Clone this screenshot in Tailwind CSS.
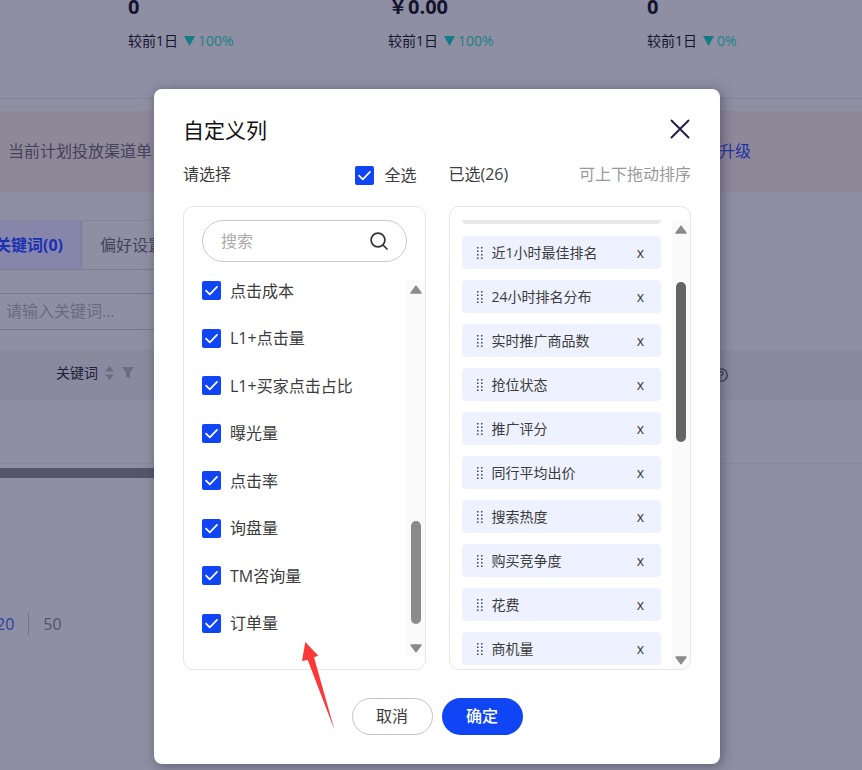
<!DOCTYPE html>
<html lang="zh-CN">
<head>
<meta charset="utf-8">
<meta name="viewport" content="width=device-width, initial-scale=1">
<title>自定义列</title>
<script src="https://cdn.jsdelivr.net/npm/@tailwindcss/browser@4"></script>
</head>
<body class="relative min-h-screen overflow-hidden bg-[#8f8fa3] font-['Open_Sans','Noto_Sans_CJK_SC',sans-serif] text-[#3c3c3c]">

<svg class="hidden">
  <symbol id="check" viewBox="0 0 19 19"><path d="M4 9.6 7.8 13.4 15 5.8" fill="none" stroke="#fff" stroke-width="1.7" stroke-linecap="round" stroke-linejoin="round"/></symbol>
  <symbol id="grip" viewBox="0 0 8 14"><path d="M1 1h1.5v1.5H1zM5 1h1.5v1.5H5zM1 4.5h1.5V6H1zM5 4.5h1.5V6H5zM1 8h1.5v1.5H1zM5 8h1.5v1.5H5zM1 11.5h1.5V13H1zM5 11.5h1.5V13H5z" fill="#444"/></symbol>
  <symbol id="up" viewBox="0 0 12 9"><path d="M6 1.2 11 8H1z" fill="#8b8b8b" stroke="#8b8b8b" stroke-width="1.4" stroke-linejoin="round"/></symbol>
  <symbol id="down" viewBox="0 0 12 9"><path d="M1 1h10L6 7.8z" fill="#8b8b8b" stroke="#8b8b8b" stroke-width="1.4" stroke-linejoin="round"/></symbol>
</svg>

<!-- page behind the dialog -->
<main>
  <section class="h-[99px] border-b border-[#83839a] pl-32 text-sm text-[#14142e]">
    <div class="grid grid-cols-[260px_259px_1fr]">
      <div>
        <p class="h-[14px] text-xl leading-[14px] font-bold">0</p>
        <p class="mt-[15px] flex items-center leading-6">较前1日<svg class="mr-[3px] ml-1.5 h-[10px] w-[11px]" viewBox="0 0 11 10"><path d="M0 0h11L5.500 10z" fill="#147c84"/></svg><span class="text-[#1d8088]">100%</span></p>
      </div>
      <div>
        <p class="h-[14px] text-xl leading-[14px] font-bold">￥0.00</p>
        <p class="mt-[15px] flex items-center leading-6">较前1日<svg class="mr-[3px] ml-1.5 h-[10px] w-[11px]" viewBox="0 0 11 10"><path d="M0 0h11L5.500 10z" fill="#147c84"/></svg><span class="text-[#1d8088]">100%</span></p>
      </div>
      <div>
        <p class="h-[14px] text-xl leading-[14px] font-bold">0</p>
        <p class="mt-[15px] flex items-center leading-6">较前1日<svg class="mr-[3px] ml-1.5 h-[10px] w-[11px]" viewBox="0 0 11 10"><path d="M0 0h11L5.500 10z" fill="#147c84"/></svg><span class="text-[#1d8088]">0%</span></p>
      </div>
    </div>
  </section>

  <section class="mt-3 flex h-[81px] items-center bg-[#8f8899] pb-0.5 pl-2 text-base text-[#43435a]">
    <p class="w-[711px]">当前计划投放渠道单</p>
    <a href="#" class="text-[#2433a4]">升级</a>
  </section>

  <nav class="mt-7 flex h-[50px] w-[600px] border-y border-t-[#86869b] border-b-[#7b7b91] text-base">
    <a href="#" class="flex w-[82px] items-center justify-end border-r border-[#7b7b91] bg-[#8686ab] pr-[18px] font-bold whitespace-nowrap text-[#1c30b4]">关键词(0)</a>
    <a href="#" class="flex items-center pl-[18px] text-[#43435a]">偏好设置</a>
  </nav>

  <input aria-label="关键词" placeholder="请输入关键词..." class="mt-[23px] block h-[37px] w-[400px] border-y border-[#777790] pb-0.5 pl-1.5 text-base placeholder:text-[#6a6a80]">

  <table class="mt-5 w-full border-collapse text-sm text-[#20203a]">
    <thead>
      <tr class="h-[49px] border-y border-[#89899d] bg-[#8a8a9e]">
        <th scope="col" class="w-[714px] pb-1 pl-14 text-left font-normal">
          <span class="flex items-center">关键词
            <svg class="ml-[7px] h-[14px] w-[9px]" viewBox="0 0 9 14"><path d="M0 5.500 4.500 0 9 5.500zM0 8.500h9L4.500 14z" fill="#6c6c82"/></svg>
            <svg class="ml-2 h-[12px] w-[12px]" viewBox="0 0 12 12"><path d="M0 0h12L8 5.500V11.500L4 9.500V5.500z" fill="#6c6c82"/></svg>
          </span>
        </th>
        <th scope="col" class="text-left">
          <svg class="h-[14px] w-[14px]" viewBox="0 0 14 14" fill="none" stroke="#33334a" stroke-width="1.300"><circle cx="7" cy="7" r="6.200"/><path d="M5 5.600c0-2.600 4-2.600 4-.2 0 1.500-2 1.500-2 2.900M7 9.400v1.300"/></svg>
        </th>
      </tr>
    </thead>
    <tbody><tr class="h-16 border-b border-[#89899d]"><td colspan="2"></td></tr></tbody>
  </table>
  <div class="mt-1 h-[10px] w-[500px] bg-[#55556a]"></div>

  <nav class="mt-[132px] flex h-7 items-center text-base text-[#55556a]">
    <a href="#" class="-ml-1 text-[#2c40a8]">20</a>
    <span class="mx-[14px] h-6 w-px bg-[#74748a]"></span>
    <a href="#">50</a>
  </nav>
</main>

<!-- dialog layer -->
<div class="absolute inset-0 flex items-start justify-center pt-[89px] pl-3">
  <div role="dialog" aria-labelledby="title" class="relative w-[566px] rounded-lg bg-white px-[29px] pt-6 pb-[29px] shadow-[2px_2px_12px_rgba(40,40,70,0.5)]">
    <header class="flex h-9 items-center justify-between">
      <h1 id="title" class="text-[21px] text-[#111]">自定义列</h1>
      <button aria-label="关闭" class="mb-1 mr-px"><svg class="h-5 w-5" viewBox="0 0 20 20"><path d="M1.500 1.500 18.500 18.500M18.500 1.500 1.500 18.500" stroke="#1e1b45" stroke-width="1.900" stroke-linecap="round"/></svg></button>
    </header>

    <div class="mt-[10px] grid grid-cols-2 gap-[23px] text-base leading-7">
      <div class="flex items-center justify-between pr-[9px]">
        <span>请选择</span>
        <label class="flex items-center gap-[10px] pt-0.5"><span class="grid"><input type="checkbox" checked class="col-start-1 row-start-1 h-[19px] w-[19px] appearance-none rounded-[2px] bg-[#0f45f5]"><svg class="pointer-events-none col-start-1 row-start-1 h-[19px] w-[19px]"><use href="#check"/></svg></span>全选</label>
      </div>
      <div class="flex items-center justify-between"><span>已选(26)</span><span class="text-[#999]">可上下拖动排序</span></div>
    </div>

    <div class="mt-[17px] grid h-[464px] grid-cols-2 gap-[23px]">
      <section class="flex flex-col overflow-hidden rounded-[10px] border border-[#e6e6e9]">
        <div class="mx-[18px] mt-[13px] flex h-[42px] items-center rounded-full border border-[#c9c9cc] px-[18px]">
          <input type="search" aria-label="搜索" placeholder="搜索" class="min-w-0 flex-1 text-base outline-none placeholder:text-[#aaa]">
          <svg class="h-[18px] w-[18px]" viewBox="0 0 18 18" fill="none" stroke="#333" stroke-width="1.700" stroke-linecap="round"><circle cx="8" cy="8" r="6.900"/><path d="m13 13 4 4"/></svg>
        </div>
        <div class="mt-1 flex flex-1">
          <ul id="options" class="mt-px flex h-[380px] flex-1 flex-col pl-[18px] text-base"></ul>
          <div class="mt-[14px] mb-3 flex w-[18px] flex-col items-center bg-[#fafafa] pt-[5px] pb-1">
            <svg class="h-[9px] w-3"><use href="#up"/></svg>
            <span class="mt-auto mb-5 h-[103px] w-[10px] rounded-full bg-[#8b8b8b]"></span>
            <svg class="h-[9px] w-3"><use href="#down"/></svg>
          </div>
        </div>
      </section>

      <section class="flex overflow-hidden rounded-[10px] border border-[#e6e6e9] pt-[13px]">
        <div class="flex flex-1 flex-col pr-[11px] pl-3">
          <div class="h-1 shrink-0 rounded-b bg-[#e9e9ea]"></div>
          <ul id="chosen" class="mt-3 flex flex-col gap-[11px] text-sm"></ul>
        </div>
        <div class="flex w-[18px] flex-col items-center bg-[#fafafa] pt-[5px] pb-1">
          <svg class="h-[9px] w-3"><use href="#up"/></svg>
          <span class="mt-12 mb-auto h-40 w-[10px] rounded-full bg-[#646464]"></span>
          <svg class="h-[9px] w-3"><use href="#down"/></svg>
        </div>
      </section>
    </div>

    <footer class="mt-7 flex justify-center gap-[9px] text-base">
      <button class="h-[37px] w-[81px] rounded-full border border-[#c4c4c8] pb-0.5">取消</button>
      <button class="h-[37px] w-[81px] rounded-full bg-[#0f45f5] pb-0.5 font-medium text-white">确定</button>
    </footer>

    <!-- annotation arrow -->
    <svg class="pointer-events-none absolute top-[553px] left-[148px] h-[88px] w-[33px]" viewBox="0 0 33 88"><path d="M3.300 0 16.300 13.700 12 15.300 32.500 88 5.700 18 0 19z" fill="#fd3838"/></svg>
  </div>
</div>

<script>
  const options = ['点击成本', 'L1+点击量', 'L1+买家点击占比', '曝光量', '点击率', '询盘量', 'TM咨询量', '订单量'];
  document.getElementById('options').innerHTML = options.map(t =>
    `<li class="flex flex-1 items-center"><label class="flex items-center gap-[9px]"><span class="grid"><input type="checkbox" checked class="col-start-1 row-start-1 h-[19px] w-[19px] appearance-none rounded-[2px] bg-[#0f45f5]"><svg class="pointer-events-none col-start-1 row-start-1 h-[19px] w-[19px]"><use href="#check"/></svg></span>${t}</label></li>`).join('');
  const chosen = ['近1小时最佳排名', '24小时排名分布', '实时推广商品数', '抢位状态', '推广评分', '同行平均出价', '搜索热度', '购买竞争度', '花费', '商机量'];
  document.getElementById('chosen').innerHTML = chosen.map(t =>
    `<li class="flex h-[33px] shrink-0 items-center rounded bg-[#eef1ff] pr-[17px] pl-[14px]"><svg class="mr-2 h-[14px] w-2"><use href="#grip"/></svg><span class="flex-1">${t}</span><button aria-label="移除${t}">x</button></li>`).join('');
</script>
</body>
</html>
